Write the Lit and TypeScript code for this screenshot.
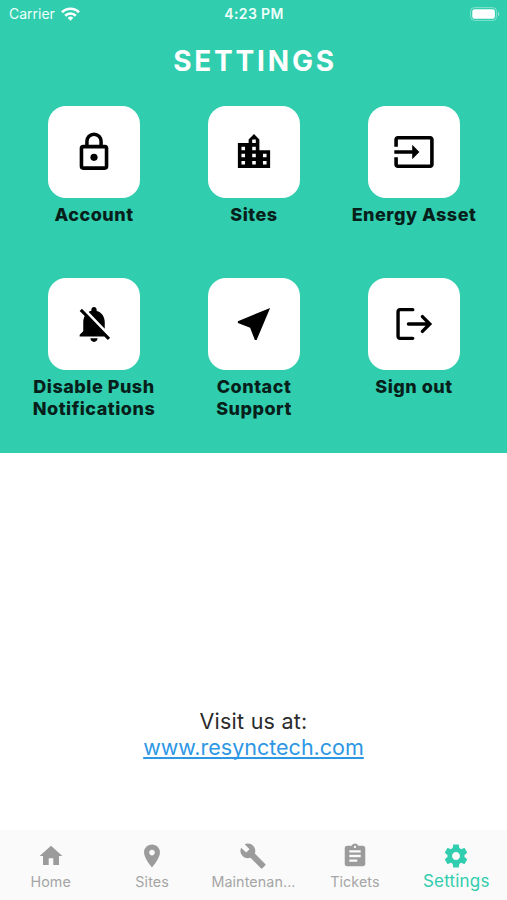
import { LitElement, html, css, svg, TemplateResult } from "lit";
import { customElement, property } from "lit/decorators.js";
import { classMap } from "lit/directives/class-map.js";

const glyphs: Record<string, TemplateResult> = {
  lock: svg`<rect x="5" y="9" width="14" height="12" rx="1" fill="none" stroke="currentColor" stroke-width="2"/><path d="M8.05 8.5V6a3.95 3.95 0 0 1 7.9 0v2.5" fill="none" stroke="currentColor" stroke-width="1.95"/><circle cx="12" cy="15" r="2"/>`,
  city: svg`<path d="M15 11V5l-3-3-3 3v2H3v14h18V11h-6zm-8 8H5v-2h2v2zm0-4H5v-2h2v2zm0-4H5V9h2v2zm6 8h-2v-2h2v2zm0-4h-2v-2h2v2zm0-4h-2V9h2v2zm0-4h-2V5h2v2zm6 12h-2v-2h2v2zm0-4h-2v-2h2v2z"/>`,
  input: svg`<path d="M21 3.01H3c-1.1 0-2 .9-2 2V9h2V4.99h18v14.03H3V15H1v4.01c0 1.1.9 1.98 2 1.98h18c1.1 0 2-.88 2-1.98v-14c0-1.11-.9-2-2-2zM11 16l4-4-4-4v3H1v2h10v3z"/>`,
  bellOff: svg`<path d="M20 18.69L7.84 6.14 5.27 3.49 4 4.76l2.8 2.8v.01c-.52.99-.8 2.16-.8 3.42v5l-2 2v1h13.73l2 2L21 19.72l-1-1.03zM12 22c1.11 0 2-.89 2-2h-4c0 1.11.89 2 2 2zm6-7.32V11c0-3.08-1.64-5.64-4.5-6.32V4c0-.83-.67-1.5-1.5-1.5s-1.5.67-1.5 1.5v.68c-.15.03-.29.08-.42.12-.1.03-.2.07-.3.11h-.01c-.01 0-.01 0-.02.01-.23.09-.46.2-.68.31 0 0-.01 0-.01.01L18 14.68z"/>`,
  nearMe: svg`<path d="M21 3L3 10.53v.98l6.84 2.65L12.48 21h.98L21 3z"/>`,
  signOut: svg`<path d="M11.3 4H4.2a1.1 1.1 0 0 0-1.1 1.1v13.8a1.1 1.1 0 0 0 1.1 1.1h7.1M8.9 12h11.6M16.7 7.9L20.8 12l-4.1 4.1" fill="none" stroke="currentColor" stroke-width="1.9" stroke-linecap="round"/>`,
  home: svg`<path d="M10 20v-6h4v6h5v-8h3L12 3 2 12h3v8z"/>`,
  pin: svg`<path d="M12 2C8.13 2 5 5.13 5 9c0 5.25 7 13 7 13s7-7.75 7-13c0-3.87-3.13-7-7-7zm0 9.5c-1.38 0-2.5-1.12-2.5-2.5s1.12-2.5 2.5-2.5 2.5 1.12 2.5 2.5-1.12 2.5-2.5 2.5z"/>`,
  wrench: svg`<path d="M22.7 19l-9.1-9.1c.9-2.3.4-5-1.5-6.9-2-2-5-2.4-7.4-1.3L9 6 6 9 1.6 4.7C.4 7.1.9 10.1 2.9 12.1c1.9 1.9 4.6 2.4 6.9 1.5l9.1 9.1c.4.4 1 .4 1.4 0l2.3-2.3c.5-.4.5-1.1.1-1.4z"/>`,
  clipboard: svg`<path d="M19 3h-4.18C14.4 1.84 13.3 1 12 1c-1.3 0-2.4.84-2.82 2H5c-1.1 0-2 .9-2 2v14c0 1.1.9 2 2 2h14c1.1 0 2-.9 2-2V5c0-1.1-.9-2-2-2zm-7 0c.55 0 1 .45 1 1s-.45 1-1 1-1-.45-1-1 .45-1 1-1zm2 14H7v-2h7v2zm3-4H7v-2h10v2zm0-4H7V7h10v2z"/>`,
  gear: svg`<path d="M19.43 12.98c.04-.32.07-.64.07-.98s-.03-.66-.07-.98l2.11-1.65c.19-.15.24-.42.12-.64l-2-3.46c-.12-.22-.39-.3-.61-.22l-2.49 1c-.52-.4-1.08-.73-1.69-.98l-.38-2.65C14.46 2.18 14.25 2 14 2h-4c-.25 0-.46.18-.49.42l-.38 2.65c-.61.25-1.17.59-1.69.98l-2.49-1c-.23-.09-.49 0-.61.22l-2 3.46c-.13.22-.07.49.12.64l2.11 1.65c-.04.32-.07.65-.07.98s.03.66.07.98l-2.11 1.65c-.19.15-.24.42-.12.64l2 3.46c.12.22.39.3.61.22l2.49-1c.52.4 1.08.73 1.69.98l.38 2.65c.03.24.24.42.49.42h4c.25 0 .46-.18.49-.42l.38-2.65c.61-.25 1.17-.59 1.69-.98l2.49 1c.23.09.49 0 .61-.22l2-3.46c.12-.22.07-.49-.12-.64l-2.11-1.65zM12 15.5c-1.93 0-3.5-1.57-3.5-3.5s1.57-3.5 3.5-3.5 3.5 1.57 3.5 3.5-1.57 3.5-3.5 3.5z"/>`,
};

@customElement("app-icon")
class AppIcon extends LitElement {
  @property() name = "";
  static styles = css`
    :host { display: block; width: 44px; height: 44px; }
    svg { display: block; width: 100%; height: 100%; fill: currentColor; }
  `;
  render() {
    return html`<svg viewBox="-0.28 -0.28 24.56 24.56">${glyphs[this.name]}</svg>`;
  }
}

@customElement("setting-tile")
class SettingTile extends LitElement {
  @property() icon = "";
  @property({ attribute: false }) lines: string[] = [];
  static styles = css`
    :host { display: flex; flex-direction: column; align-items: center; }
    .card {
      width: 92px; height: 92px; border-radius: 18px; background: #fff; color: #000;
      display: flex; align-items: center; justify-content: center;
    }
    .label {
      margin-top: 6px; padding-left: 1px; font-size: 18px; line-height: 22px; font-weight: 800;
      letter-spacing: 0.5px; color: #071f1b; text-align: center; white-space: nowrap;
    }
  `;
  render() {
    return html`
      <div class="card"><app-icon name=${this.icon}></app-icon></div>
      <div class="label">${this.lines.map((l) => html`<div>${l}</div>`)}</div>
    `;
  }
}

@customElement("status-bar")
class StatusBar extends LitElement {
  static styles = css`
    :host {
      display: grid; grid-template-columns: 1fr auto 1fr; align-items: center;
      height: 27px; padding: 0 7px 0 9px; color: #effffb; font-size: 14px; line-height: 27px;
    }
    .left { display: flex; align-items: center; gap: 6px; }
    .wifi { width: 19px; height: 14px; }
    .time { font-weight: 600; letter-spacing: 0.35px; margin-right: 1px; }
    .battery { width: 30px; height: 14px; justify-self: end; }
  `;
  render() {
    return html`
      <div class="left">
        <span>Carrier</span>
        <svg class="wifi" viewBox="0 0 19 14" fill="none" stroke="#fff" stroke-width="2.7">
          <path d="M1 5.3a12 12 0 0 1 17 0"/>
          <path d="M4.2 8.7a7.5 7.5 0 0 1 10.6 0"/>
          <path d="M9.5 13.7L6.7 10.9a4 4 0 0 1 5.6 0z" fill="#fff" stroke="none"/>
        </svg>
      </div>
      <div class="time">4:23 PM</div>
      <svg class="battery" viewBox="0 0 30 14">
        <rect x="0.6" y="0.6" width="26" height="12.8" rx="3.8" fill="none" stroke="#fff" stroke-opacity="0.4"/>
        <rect x="2.3" y="2.3" width="22.6" height="9.4" rx="2.3" fill="#fff"/>
        <path d="M28 5v4.2c1.8-.7 1.8-3.5 0-4.2z" fill="#fff" fill-opacity="0.5"/>
      </svg>
    `;
  }
}

@customElement("tab-bar")
class TabBar extends LitElement {
  static styles = css`
    :host {
      display: grid; grid-template-columns: repeat(5, 1fr); height: 70px; flex: none;
      background: #fafafa; color: #9b9b9b;
    }
    .tab { display: flex; flex-direction: column; align-items: center; padding-top: 12px; }
    .tab app-icon { width: 28px; height: 28px; }
    .text { font-size: 14.3px; line-height: 20px; margin-top: 2px; letter-spacing: 0.1px; color: #a5a5a5; }
    .active { color: #30cdae; }
    .active .text { font-size: 17px; color: #30cdae; margin-top: 1px; letter-spacing: 0.2px; }
  `;
  tabs = [
    ["home", "Home"],
    ["pin", "Sites"],
    ["wrench", "Maintenan..."],
    ["clipboard", "Tickets"],
    ["gear", "Settings"],
  ];
  render() {
    return this.tabs.map(
      ([icon, text]) => html`
        <div class=${classMap({ tab: true, active: text === "Settings" })}>
          <app-icon name=${icon}></app-icon>
          <div class="text">${text}</div>
        </div>
      `
    );
  }
}

@customElement("app-root")
class AppRoot extends LitElement {
  static styles = css`
    :host {
      display: flex; flex-direction: column; height: 900px; background: #fff;
      font-family: Inter, "Liberation Sans", sans-serif;
    }
    .panel { background: #30cdae; height: 453px; flex: none; }
    .title {
      margin: 14px 0 0; padding-left: 3px; text-align: center; color: #fff;
      font-size: 28px; line-height: 40px; font-weight: 700; letter-spacing: 2.8px;
    }
    .tiles {
      display: grid; grid-template-columns: repeat(3, 160px); grid-auto-rows: 172px;
      justify-content: center; margin-top: 25px;
    }
    .visit {
      flex: 1; padding-top: 255px; text-align: center; font-size: 21.5px; line-height: 26px;
      letter-spacing: 0.25px; color: #2b2b2b;
    }
    .link-row { letter-spacing: 0; }
    .link {
      color: #2e97e5; text-decoration: underline; text-decoration-thickness: 1.5px;
      text-underline-offset: 2px; text-decoration-skip-ink: none;
    }
  `;
  tiles: [string, string[]][] = [
    ["lock", ["Account"]],
    ["city", ["Sites"]],
    ["input", ["Energy Asset"]],
    ["bellOff", ["Disable Push", "Notifications"]],
    ["nearMe", ["Contact", "Support"]],
    ["signOut", ["Sign out"]],
  ];
  render() {
    return html`
      <div class="panel">
        <status-bar></status-bar>
        <h1 class="title">SETTINGS</h1>
        <div class="tiles">
          ${this.tiles.map(([icon, lines]) => html`<setting-tile .icon=${icon} .lines=${lines}></setting-tile>`)}
        </div>
      </div>
      <div class="visit">
        <div>Visit us at:</div>
        <div class="link-row"><a class="link">www.resynctech.com</a></div>
      </div>
      <tab-bar></tab-bar>
    `;
  }
}
